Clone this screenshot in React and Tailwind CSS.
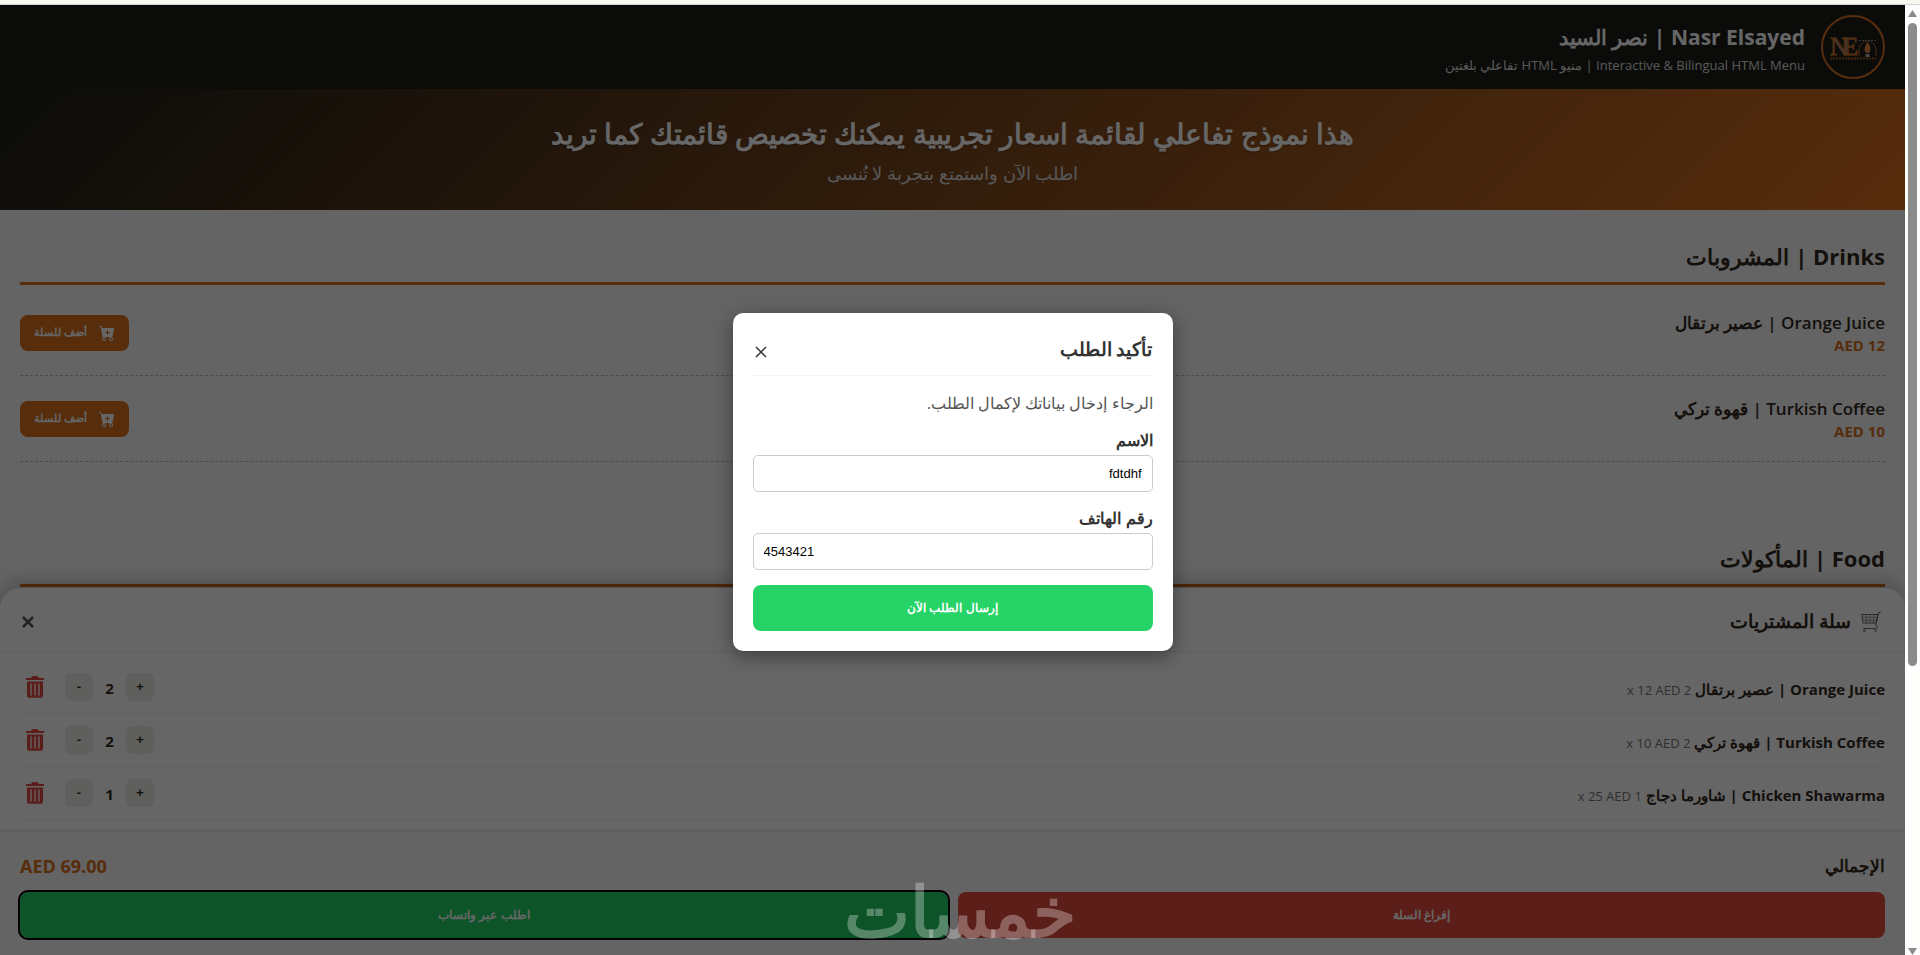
import React from "react";
import { BsCartPlusFill } from "react-icons/bs";

const drinks = [
  { name: "Orange Juice | عصير برتقال", price: "12 AED" },
  { name: "Turkish Coffee | قهوة تركي", price: "10 AED" },
];

const cart = [
  { name: "Orange Juice | عصير برتقال", qty: 2, price: "12 AED" },
  { name: "Turkish Coffee | قهوة تركي", qty: 2, price: "10 AED" },
  { name: "Chicken Shawarma | شاورما دجاج", qty: 1, price: "25 AED" },
];

function Logo() {
  return (
    <svg viewBox="0 0 64 64" className="size-16 shrink-0" direction="ltr" role="img" aria-label="NE">
      <circle cx="32" cy="32" r="31" fill="none" stroke="#d97020" strokeWidth="2" />
      <text x="9" y="40" direction="ltr" textAnchor="start" fontFamily="Liberation Serif, serif" fontSize="25" fill="#8f8a86" stroke="#d97020" strokeWidth=".8">N</text>
      <text x="22" y="40" direction="ltr" textAnchor="start" fontFamily="Liberation Serif, serif" fontSize="25" fill="#8f8a86" stroke="#d97020" strokeWidth=".8">E</text>
      <path d="M38 41v-5c0-6 4-10 8.500-10s8.500 4 8.500 10v5" fill="none" stroke="#a56a3c" strokeWidth="1" />
      <path d="M38 25.500h17" stroke="#8f8a86" strokeWidth="1" strokeDasharray="2 1" />
      <path d="M46.500 27c-2 3-3 5-3 8l1.500 3h3l1.500-3c0-3-1-5-3-8z" fill="#e08a45" />
      <path d="M44.500 39h4v3h-4z" fill="#b8b4b0" />
      <path d="M9 43.500h46" stroke="#d97020" strokeWidth="2" strokeDasharray="2 1" opacity=".75" />
    </svg>
  );
}

function CartOutline() {
  return (
    <svg viewBox="0 0 20 20" className="size-5" fill="none" stroke="#5c5c5c" strokeWidth="0.900" aria-hidden="true">
      <path d="M19.700 0.500h-2l-3.200 13" />
      <path d="M17 2.500H.8l1.200 8.500H15z" />
      <path d="M1.200 5.300H16.300M1.600 8.200H15.600M5 2.500l.6 8.500M9 2.500V11M13 2.500l-.6 8.500" strokeWidth=".6" />
      <path d="M14.500 13.500c2.500 0 2.500 3 0 3H2.500" />
      <circle cx="3.500" cy="18.500" r="1" />
      <circle cx="14.500" cy="18.500" r="1" />
    </svg>
  );
}

function TrashIcon() {
  return (
    <svg viewBox="0 0 18 22" className="h-[22px] w-[18px]" aria-hidden="true">
      <path d="M5 2c.5-1.300 1.500-2 2.500-2h3c1 0 2 .7 2.500 2h4.500c.3 0 .5.200.5.500V4H0V2.500C0 2.200.2 2 .5 2z" fill="#e24a3f" />
      <path d="M1 5.500h16V19.500a2.200 2.200 0 0 1-2.200 2.200H3.200A2.200 2.200 0 0 1 1 19.500z" fill="#e24a3f" />
      <path d="M5 8v11M9 8v11M13 8v11" stroke="#fff" strokeWidth="1.300" strokeLinecap="round" />
    </svg>
  );
}

function CloseIcon({ className, weight }) {
  return (
    <svg viewBox="0 0 12 12" className={className} fill="none" stroke="currentColor" strokeWidth={weight} aria-hidden="true">
      <path d="M1 1l10 10M11 1L1 11" />
    </svg>
  );
}

function SectionTitle({ children }) {
  return (
    <h2 className="border-b-[3px] border-[#d97020] pb-2 text-[22px] leading-9 font-bold">{children}</h2>
  );
}

function Menu() {
  return (
    <main className="flex flex-col gap-[78px] px-5 pt-7">
      <section>
        <SectionTitle>Drinks | المشروبات</SectionTitle>
        <ul className="pt-[5px]">
          {drinks.map((d) => (
            <li key={d.name} className="flex h-[86px] items-center justify-between border-b border-dashed border-[#bbb]">
              <div>
                <h3 className="text-[17px] leading-6 font-semibold">{d.name}</h3>
                <p className="text-[15px] leading-5 font-bold text-[#d97020]">{d.price}</p>
              </div>
              <button type="button" className="flex h-9 items-center gap-3 rounded-lg bg-[#d97020] px-[14px] font-['Liberation_Sans',sans-serif] text-[11px] font-bold text-white">
                <BsCartPlusFill className="size-4" />
                أضف للسلة
              </button>
            </li>
          ))}
        </ul>
      </section>
      <section>
        <SectionTitle>Food | المأكولات</SectionTitle>
      </section>
    </main>
  );
}

function CartSheet() {
  return (
    <aside className="absolute inset-x-0 bottom-0 flex flex-col rounded-t-[20px] bg-white shadow-[0_-5px_20px_rgba(0,0,0,0.25)]">
      <header className="flex h-16 items-center justify-between border-b border-[#eee] px-5 pt-1">
        <h2 className="flex items-center gap-[10px] pr-1 text-[19px] font-semibold">
          <CartOutline />
          سلة المشتريات
        </h2>
        <button type="button" aria-label="إغلاق السلة" className="px-0.5 text-[#555]">
          <CloseIcon className="size-3" weight="2.5" />
        </button>
      </header>
      <ul className="px-5 pt-[9px] pb-[10px]">
        {cart.map((c) => (
          <li key={c.name} className="flex h-[53px] items-center justify-between border-b border-[#eee]">
            <p className="pt-1 text-[15px] font-bold">
              {c.name} <small className="text-[13px] font-normal text-[#777]">{c.qty} x {c.price}</small>
            </p>
            <div className="flex items-center">
              <button type="button" aria-label="زيادة" className="size-7 rounded-md bg-[#ededeb] font-['Liberation_Sans',sans-serif] text-[13px] font-bold">+</button>
              <span className="w-[33px] pt-0.5 text-center text-[15px] font-bold">{c.qty}</span>
              <button type="button" aria-label="إنقاص" className="size-7 rounded-md bg-[#ededeb] font-['Liberation_Sans',sans-serif] text-[13px] font-bold">-</button>
              <button type="button" aria-label="حذف" className="mr-[15px] px-1.5"><TrashIcon /></button>
            </div>
          </li>
        ))}
      </ul>
      <footer className="border-t-2 border-[#eee] bg-[#fafafa] px-5 pt-[18px] pb-[17px]">
        <div className="flex items-center justify-between pb-[10px] text-[18px] leading-8 font-bold">
          <span className="text-[17px] font-semibold">الإجمالي</span>
          <span className="text-[#d97020]">69.00 AED</span>
        </div>
        <div className="flex gap-[10px] font-['Liberation_Sans',sans-serif] text-[12px] font-bold text-white">
          <button type="button" className="h-[46px] flex-1 rounded-lg bg-[#e74c3c]">إفراغ السلة</button>
          <button type="button" className="h-[46px] flex-1 rounded-lg bg-[#25d366] outline-2 outline-black">اطلب عبر واتساب</button>
        </div>
      </footer>
    </aside>
  );
}

function OrderDialog() {
  const input = "h-[37px] w-full rounded-[5px] border border-[#ccc] px-[10px] font-['Liberation_Sans',sans-serif] text-[13px] text-black";
  return (
    <div className="absolute inset-0 flex items-center justify-center bg-black/60">
      <form role="dialog" aria-labelledby="dlg-title" className="mt-1 flex w-[440px] flex-col rounded-[10px] bg-white p-5 text-[#333] shadow-[0_5px_20px_rgba(0,0,0,0.4)]">
        <header className="flex h-[43px] items-start justify-between border-b border-[#f5f5ec]">
          <h2 id="dlg-title" className="text-[19px] leading-8 font-semibold">تأكيد الطلب</h2>
          <button type="button" aria-label="إغلاق" className="px-[2px] pt-[13px]"><CloseIcon className="size-3" weight="1.5" /></button>
        </header>
        <p className="pt-[15px] text-[16px] leading-6 text-[#555]">الرجاء إدخال بياناتك لإكمال الطلب.</p>
        <label htmlFor="name" className="pt-[13px] pb-[3px] text-[16px] leading-6 font-semibold">الاسم</label>
        <input id="name" dir="ltr" defaultValue="fdtdhf" className={`${input} text-right`} />
        <label htmlFor="phone" className="pt-[14px] pb-[3px] text-[16px] leading-6 font-semibold">رقم الهاتف</label>
        <input id="phone" type="tel" dir="ltr" defaultValue="4543421" className={`${input} text-left`} />
        <button type="submit" className="mt-[15px] h-[46px] rounded-lg bg-[#25d366] font-['Liberation_Sans',sans-serif] text-[12px] font-bold text-white">إرسال الطلب الآن</button>
      </form>
    </div>
  );
}

function Scrollbar() {
  return (
    <div className="flex w-[15px] shrink-0 flex-col items-center bg-[#fdfdfb] pt-[5px]" aria-hidden="true">
      <svg viewBox="0 0 9 7" className="h-[7px] w-[9px]"><path d="M4.500 0L9 7H0z" fill="#8b8b8b" /></svg>
      <div className="flex w-full flex-1 justify-center py-[6px]">
        <div className="h-[70%] w-[9px] rounded-full bg-[#8b8b8b]" />
      </div>
      <svg viewBox="0 0 9 7" className="h-[7px] w-[9px]"><path d="M4.500 7L9 0H0z" fill="#8b8b8b" /></svg>
    </div>
  );
}

export default function App() {
  return (
    <div className="relative flex h-screen flex-col overflow-hidden font-['Open_Sans','Noto_Sans',sans-serif] text-[#33291e]">
      <div className="h-[5px] shrink-0 border-b border-[#d3d5ce] bg-[#f6f9ef]" />
      <div className="flex min-h-0 flex-1">
        <div dir="rtl" className="relative min-w-0 flex-1 overflow-hidden bg-[#fafafa]">
          <header className="flex h-[84px] items-center gap-4 bg-[#1c1e1a] px-5 text-white">
            <Logo />
            <div className="pt-1">
              <h1 className="text-[21px] leading-8 font-bold">Nasr Elsayed | نصر السيد</h1>
              <p className="text-[13px] leading-6 text-[#ddd]">Interactive &amp; Bilingual HTML Menu | منيو HTML تفاعلي بلغتين</p>
            </div>
          </header>
          <div className="flex h-[121px] flex-col items-center justify-center gap-1 bg-[linear-gradient(135deg,#1c1e1a,#d97020)] pt-0.5 text-white">
            <p className="text-[28px] leading-10 font-bold text-shadow-sm">هذا نموذج تفاعلي لقائمة اسعار تجريبية يمكنك تخصيص قائمتك كما تريد</p>
            <p className="text-[18px] leading-8 text-[#ddd]">اطلب الآن واستمتع بتجربة لا تُنسى</p>
          </div>
          <Menu />
          <CartSheet />
          <OrderDialog />
        </div>
        <Scrollbar />
      </div>
      <div className="pointer-events-none absolute inset-x-0 bottom-0 flex justify-center text-[70px] leading-[90px] font-bold text-white/30" aria-hidden="true">
        خمسات
      </div>
    </div>
  );
}
